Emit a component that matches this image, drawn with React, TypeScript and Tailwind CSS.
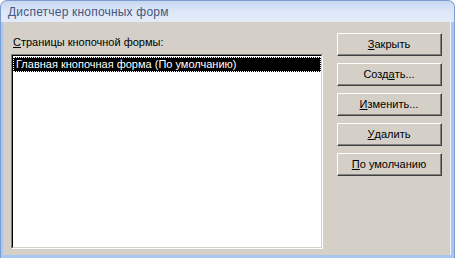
import type { ReactNode } from "react";

function Btn({ children }: { children: ReactNode }) {
  return (
    <button className="w-[105px] h-[23px] bg-[#d4d0c8] border border-t-white border-l-white border-r-[#404040] border-b-[#404040] p-0">
      <div className="w-full h-full flex items-center justify-center border-r border-b border-[#808080] text-[11px] text-black leading-none">
        {children}
      </div>
    </button>
  );
}

export default function App() {
  return (
    <div className="w-[455px] h-[258px] flex flex-col bg-[#a9c6ee] rounded-t-[7px] border border-[#7d9dd0] border-b-0 overflow-hidden font-['Liberation_Sans',Arial,sans-serif]">
      {/* Title bar */}
      <div className="h-[21px] shrink-0 flex items-center pl-[7px] bg-gradient-to-b from-[#c8d8f2] via-[#dde7f7] to-[#e3ebf8]">
        <span className="text-[12px] text-[#44577f] tracking-[0.2px]">Диспетчер кнопочных форм</span>
      </div>

      {/* Body */}
      <div className="flex-1 flex ml-[2px] mr-[3px] mb-[3px] bg-[#d4d0c8] pl-[8px] pt-[11px] border-r border-[#eef1f5]">
        {/* Left column */}
        <div className="flex flex-col pt-[3px]">
          <div className="h-[18px] pl-[2px] text-[11px] text-black leading-[13px]">
            <u>С</u>траницы кнопочной формы:
          </div>
          <div className="w-[312px] h-[195px] border border-t-[#808080] border-l-[#808080] border-r-white border-b-white">
            <div className="w-full h-full bg-white border border-t-black border-l-black border-r-[#d4d0c8] border-b-[#d4d0c8] pt-px">
              <div className="h-[15px] bg-black border border-dotted border-white flex items-center pl-[2px] text-[11px] text-white leading-none">
                Главная кнопочная форма (По умолчанию)
              </div>
            </div>
          </div>
        </div>

        {/* Buttons */}
        <div className="flex flex-col gap-[7px] ml-[14px]">
          <Btn>
            <u>З</u>акрыть
          </Btn>
          <Btn>
            Созд<u>а</u>ть...
          </Btn>
          <Btn>
            <u>И</u>зменить...
          </Btn>
          <Btn>
            <u>У</u>далить
          </Btn>
          <Btn>
            <u>П</u>о умолчанию
          </Btn>
        </div>
      </div>
    </div>
  );
}
